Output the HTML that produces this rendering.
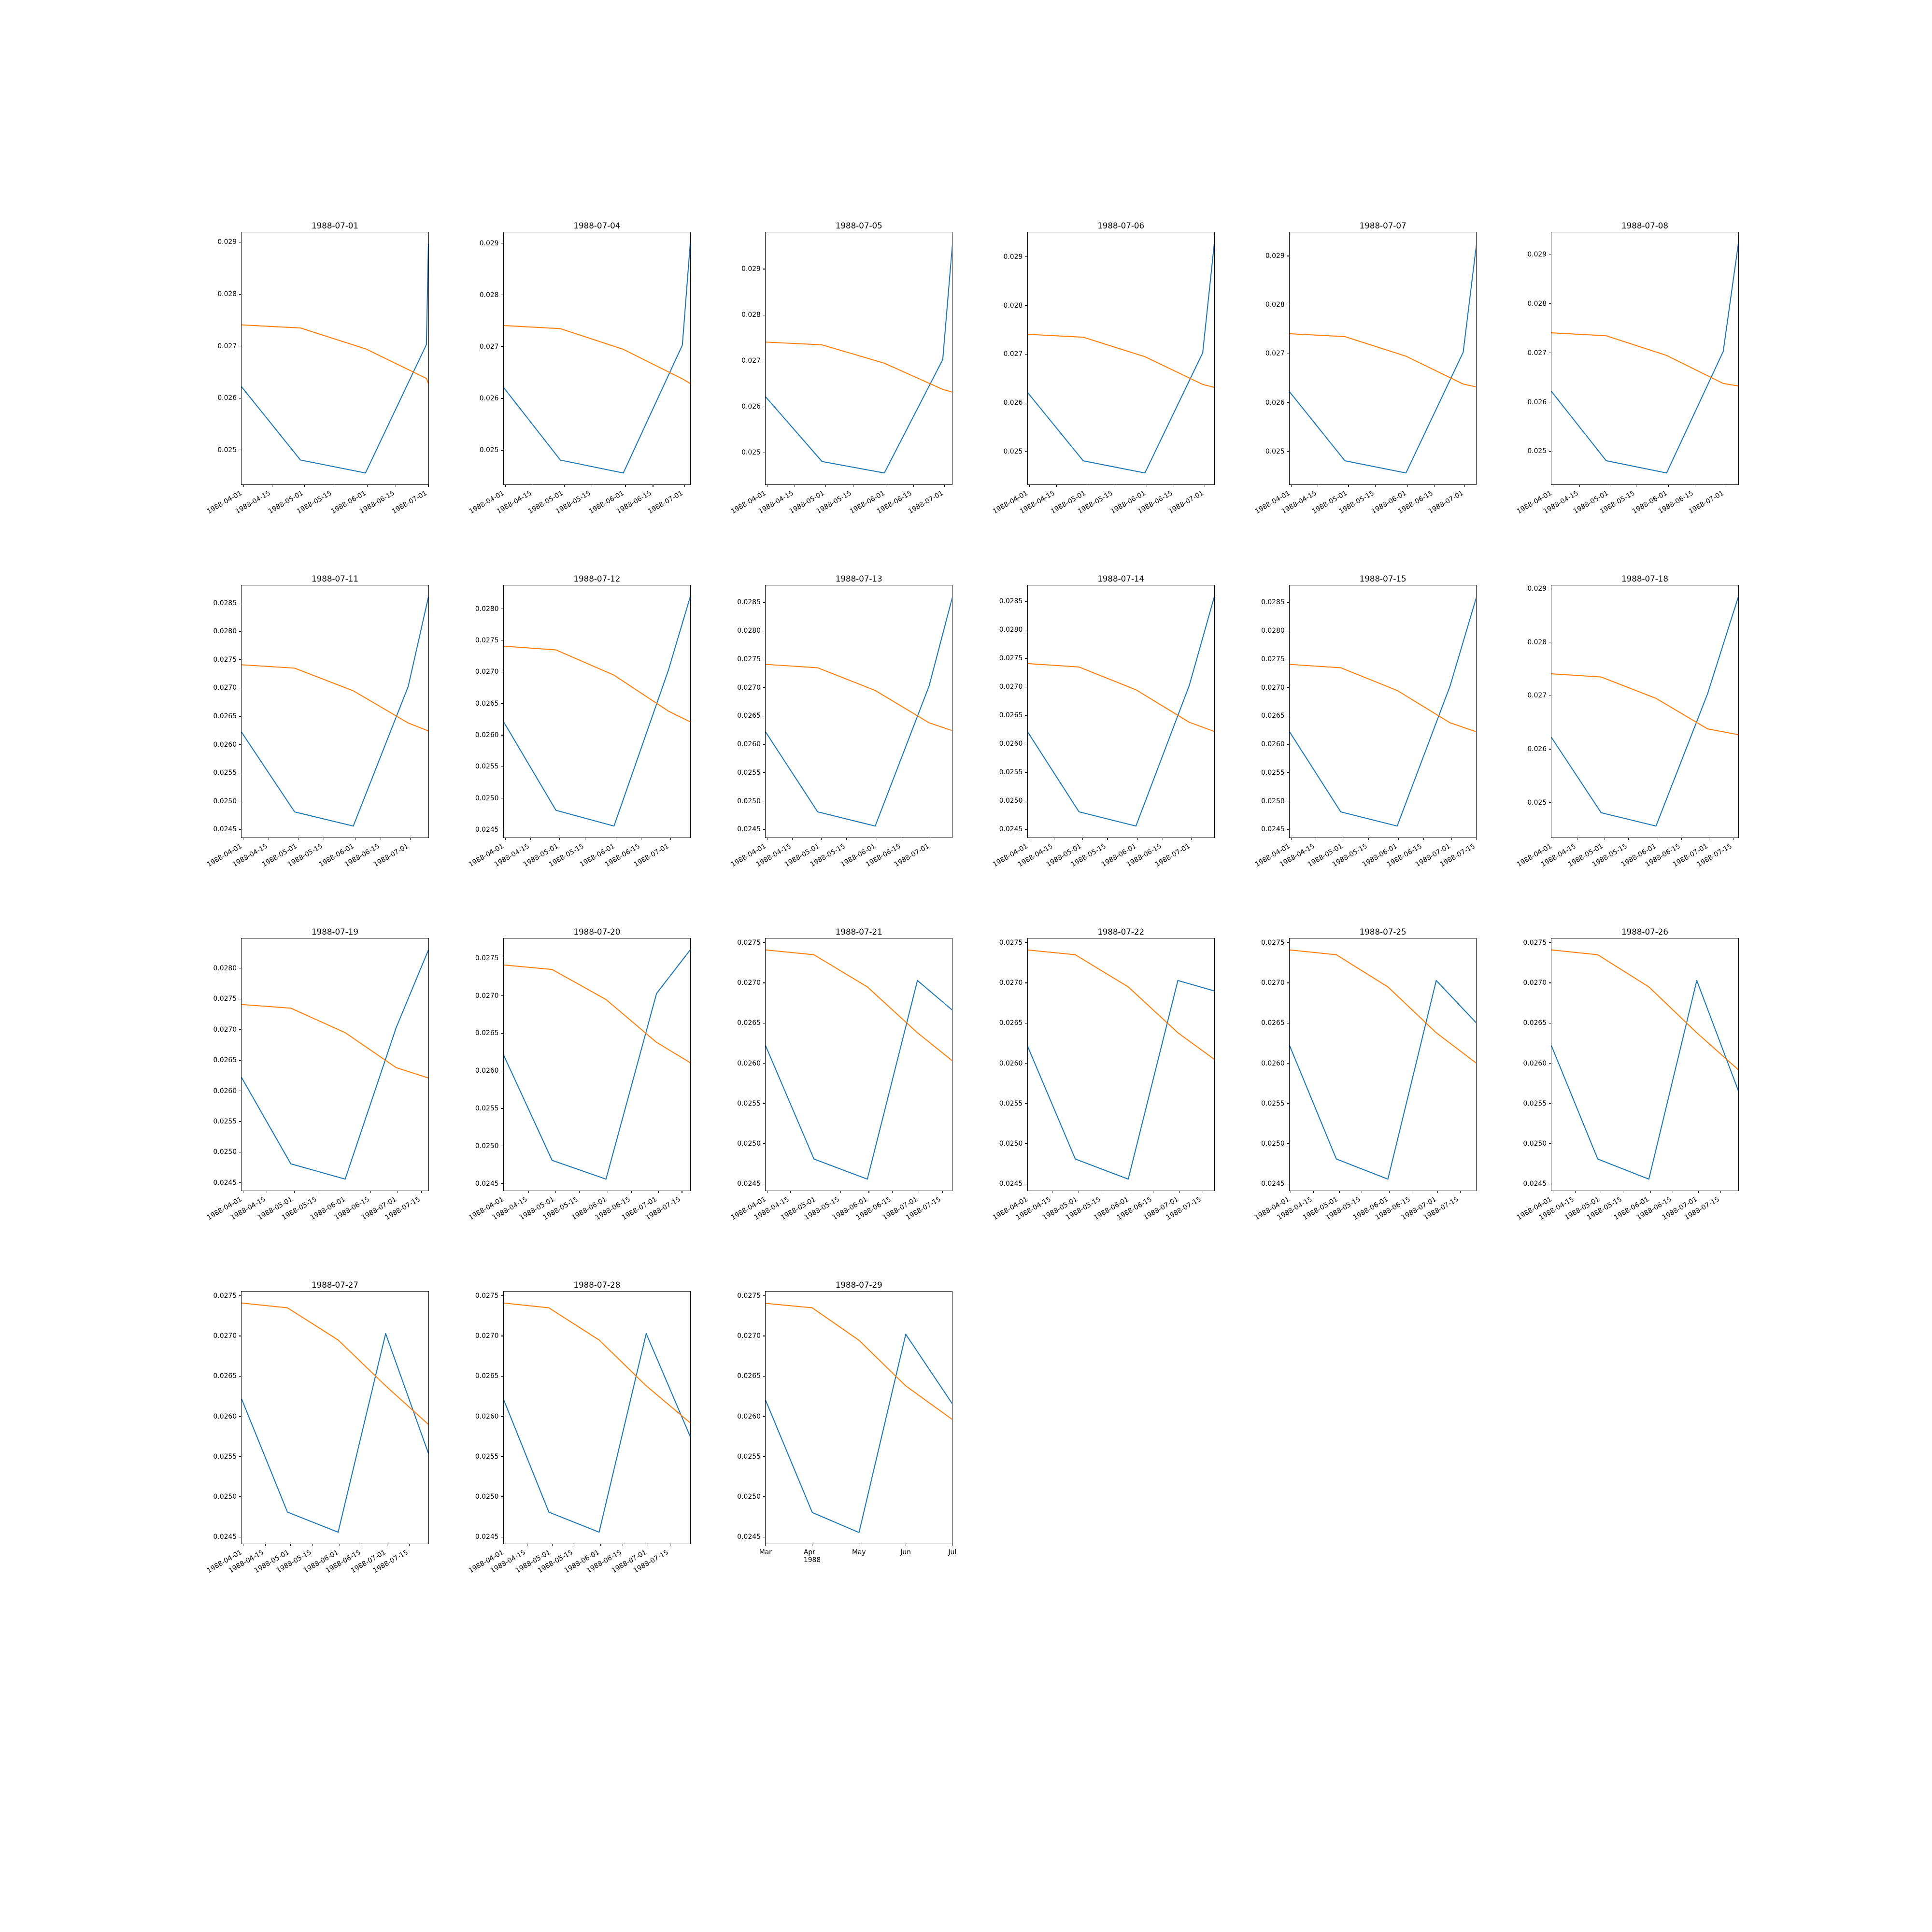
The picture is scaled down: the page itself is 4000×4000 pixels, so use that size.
<!DOCTYPE html>
<html><head><meta charset="utf-8"><style>
html,body{margin:0;padding:0;background:#fff}
body{width:4000px;height:4000px;position:relative;overflow:hidden;font-family:"DejaVu Sans","Liberation Sans",sans-serif;color:#000}
.ax{position:absolute;width:387px;height:522px}
.ax::after{content:"";position:absolute;left:-0.55px;top:-0.55px;right:-0.55px;bottom:-0.55px;border:1.1px solid #000;pointer-events:none}
.ax svg{position:absolute;left:0;top:0;width:387px;height:522px;overflow:hidden}
.ax polyline{fill:none;stroke-width:2.1;vector-effect:non-scaling-stroke;stroke-linejoin:round}
.b{stroke:#1f77b4}.o{stroke:#ff7f0e}
.t{position:absolute;left:0;width:100%;bottom:calc(100% + 4px);text-align:center;font-size:16.7px;line-height:20px;white-space:nowrap}
.yt{position:absolute;left:0;width:0;height:0;top:calc((var(--ymax) - var(--v)) * 522px / var(--H))}
.yt i{position:absolute;left:-5px;top:-0.55px;width:5px;height:1.1px;background:#000}
.yt span{position:absolute;right:9.9px;top:-8px;line-height:16px;font-size:13.9px;white-space:nowrap}
.xt{position:absolute;top:522px;width:0;height:0;left:calc(var(--d) * 387px / var(--xr))}
.xt i{position:absolute;left:-0.55px;top:0;width:1.1px;height:5px;background:#000}
.xt span{position:absolute;right:8px;top:9.8px;line-height:16px;font-size:13.9px;white-space:nowrap;transform-origin:100% 0;transform:rotate(-30deg)}
.xm span{right:auto;left:0;transform:translateX(-50%);transform-origin:50% 0}
.yr{position:absolute;left:0;top:0;font-size:13.9px}
</style></head><body>

<!-- Row 1 -->
<div class="ax" style="left:500px;top:481px;--ymax:291.905;--H:48.51;--xr:92">
<div class="t">1988-07-01</div>
<svg viewBox="0 -291.905 92 48.51" preserveAspectRatio="none"><polyline class="b" points="0,-262.2 29,-248.1 61,-245.6 91,-270.3 92,-289.7"/><polyline class="o" points="0,-274.1 29,-273.5 61,-269.5 91,-263.8 92,-262.8"/></svg>
<div class="yt" style="--v:250"><i></i><span>0.025</span></div><div class="yt" style="--v:260"><i></i><span>0.026</span></div><div class="yt" style="--v:270"><i></i><span>0.027</span></div><div class="yt" style="--v:280"><i></i><span>0.028</span></div><div class="yt" style="--v:290"><i></i><span>0.029</span></div>
<div class="xt" style="--d:1"><i></i><span>1988-04-01</span></div><div class="xt" style="--d:15"><i></i><span>1988-04-15</span></div><div class="xt" style="--d:31"><i></i><span>1988-05-01</span></div><div class="xt" style="--d:45"><i></i><span>1988-05-15</span></div><div class="xt" style="--d:62"><i></i><span>1988-06-01</span></div><div class="xt" style="--d:76"><i></i><span>1988-06-15</span></div><div class="xt" style="--d:92"><i></i><span>1988-07-01</span></div>
</div>

<div class="ax" style="left:1042.4px;top:481px;--ymax:292.115;--H:48.73;--xr:95">
<div class="t">1988-07-04</div>
<svg viewBox="0 -292.115 95 48.73" preserveAspectRatio="none"><polyline class="b" points="0,-262.2 29,-248.1 61,-245.6 91,-270.3 95,-289.9"/><polyline class="o" points="0,-274.1 29,-273.5 61,-269.5 91,-263.8 95,-262.9"/></svg>
<div class="yt" style="--v:250"><i></i><span>0.025</span></div><div class="yt" style="--v:260"><i></i><span>0.026</span></div><div class="yt" style="--v:270"><i></i><span>0.027</span></div><div class="yt" style="--v:280"><i></i><span>0.028</span></div><div class="yt" style="--v:290"><i></i><span>0.029</span></div>
<div class="xt" style="--d:1"><i></i><span>1988-04-01</span></div><div class="xt" style="--d:15"><i></i><span>1988-04-15</span></div><div class="xt" style="--d:31"><i></i><span>1988-05-01</span></div><div class="xt" style="--d:45"><i></i><span>1988-05-15</span></div><div class="xt" style="--d:62"><i></i><span>1988-06-01</span></div><div class="xt" style="--d:76"><i></i><span>1988-06-15</span></div><div class="xt" style="--d:92"><i></i><span>1988-07-01</span></div>
</div>

<div class="ax" style="left:1584.8px;top:481px;--ymax:297.995;--H:54.89;--xr:96">
<div class="t">1988-07-05</div>
<svg viewBox="0 -297.995 96 54.89" preserveAspectRatio="none"><polyline class="b" points="0,-262.2 29,-248.1 61,-245.6 91,-270.3 96,-295.5"/><polyline class="o" points="0,-274.1 29,-273.5 61,-269.5 91,-263.8 96,-263.2"/></svg>
<div class="yt" style="--v:250"><i></i><span>0.025</span></div><div class="yt" style="--v:260"><i></i><span>0.026</span></div><div class="yt" style="--v:270"><i></i><span>0.027</span></div><div class="yt" style="--v:280"><i></i><span>0.028</span></div><div class="yt" style="--v:290"><i></i><span>0.029</span></div>
<div class="xt" style="--d:1"><i></i><span>1988-04-01</span></div><div class="xt" style="--d:15"><i></i><span>1988-04-15</span></div><div class="xt" style="--d:31"><i></i><span>1988-05-01</span></div><div class="xt" style="--d:45"><i></i><span>1988-05-15</span></div><div class="xt" style="--d:62"><i></i><span>1988-06-01</span></div><div class="xt" style="--d:76"><i></i><span>1988-06-15</span></div><div class="xt" style="--d:92"><i></i><span>1988-07-01</span></div>
</div>

<div class="ax" style="left:2127.2px;top:481px;--ymax:295.055;--H:51.81;--xr:97">
<div class="t">1988-07-06</div>
<svg viewBox="0 -295.055 97 51.81" preserveAspectRatio="none"><polyline class="b" points="0,-262.2 29,-248.1 61,-245.6 91,-270.3 97,-292.7"/><polyline class="o" points="0,-274.1 29,-273.5 61,-269.5 91,-263.8 97,-263.2"/></svg>
<div class="yt" style="--v:250"><i></i><span>0.025</span></div><div class="yt" style="--v:260"><i></i><span>0.026</span></div><div class="yt" style="--v:270"><i></i><span>0.027</span></div><div class="yt" style="--v:280"><i></i><span>0.028</span></div><div class="yt" style="--v:290"><i></i><span>0.029</span></div>
<div class="xt" style="--d:1"><i></i><span>1988-04-01</span></div><div class="xt" style="--d:15"><i></i><span>1988-04-15</span></div><div class="xt" style="--d:31"><i></i><span>1988-05-01</span></div><div class="xt" style="--d:45"><i></i><span>1988-05-15</span></div><div class="xt" style="--d:62"><i></i><span>1988-06-01</span></div><div class="xt" style="--d:76"><i></i><span>1988-06-15</span></div><div class="xt" style="--d:92"><i></i><span>1988-07-01</span></div>
</div>

<div class="ax" style="left:2669.6px;top:481px;--ymax:294.845;--H:51.59;--xr:98">
<div class="t">1988-07-07</div>
<svg viewBox="0 -294.845 98 51.59" preserveAspectRatio="none"><polyline class="b" points="0,-262.2 29,-248.1 61,-245.6 91,-270.3 98,-292.5"/><polyline class="o" points="0,-274.1 29,-273.5 61,-269.5 91,-263.8 98,-263.2"/></svg>
<div class="yt" style="--v:250"><i></i><span>0.025</span></div><div class="yt" style="--v:260"><i></i><span>0.026</span></div><div class="yt" style="--v:270"><i></i><span>0.027</span></div><div class="yt" style="--v:280"><i></i><span>0.028</span></div><div class="yt" style="--v:290"><i></i><span>0.029</span></div>
<div class="xt" style="--d:1"><i></i><span>1988-04-01</span></div><div class="xt" style="--d:15"><i></i><span>1988-04-15</span></div><div class="xt" style="--d:31"><i></i><span>1988-05-01</span></div><div class="xt" style="--d:45"><i></i><span>1988-05-15</span></div><div class="xt" style="--d:62"><i></i><span>1988-06-01</span></div><div class="xt" style="--d:76"><i></i><span>1988-06-15</span></div><div class="xt" style="--d:92"><i></i><span>1988-07-01</span></div>
</div>

<div class="ax" style="left:3212px;top:481px;--ymax:294.53;--H:51.26;--xr:99">
<div class="t">1988-07-08</div>
<svg viewBox="0 -294.53 99 51.26" preserveAspectRatio="none"><polyline class="b" points="0,-262.2 29,-248.1 61,-245.6 91,-270.3 99,-292.2"/><polyline class="o" points="0,-274.1 29,-273.5 61,-269.5 91,-263.8 99,-263.3"/></svg>
<div class="yt" style="--v:250"><i></i><span>0.025</span></div><div class="yt" style="--v:260"><i></i><span>0.026</span></div><div class="yt" style="--v:270"><i></i><span>0.027</span></div><div class="yt" style="--v:280"><i></i><span>0.028</span></div><div class="yt" style="--v:290"><i></i><span>0.029</span></div>
<div class="xt" style="--d:1"><i></i><span>1988-04-01</span></div><div class="xt" style="--d:15"><i></i><span>1988-04-15</span></div><div class="xt" style="--d:31"><i></i><span>1988-05-01</span></div><div class="xt" style="--d:45"><i></i><span>1988-05-15</span></div><div class="xt" style="--d:62"><i></i><span>1988-06-01</span></div><div class="xt" style="--d:76"><i></i><span>1988-06-15</span></div><div class="xt" style="--d:92"><i></i><span>1988-07-01</span></div>
</div>

<!-- Row 2 -->
<div class="ax" style="left:500px;top:1212px;--ymax:288.125;--H:44.55;--xr:102">
<div class="t">1988-07-11</div>
<svg viewBox="0 -288.125 102 44.55" preserveAspectRatio="none"><polyline class="b" points="0,-262.2 29,-248.1 61,-245.6 91,-270.3 102,-286.1"/><polyline class="o" points="0,-274.1 29,-273.5 61,-269.5 91,-263.8 102,-262.4"/></svg>
<div class="yt" style="--v:245"><i></i><span>0.0245</span></div><div class="yt" style="--v:250"><i></i><span>0.0250</span></div><div class="yt" style="--v:255"><i></i><span>0.0255</span></div><div class="yt" style="--v:260"><i></i><span>0.0260</span></div><div class="yt" style="--v:265"><i></i><span>0.0265</span></div><div class="yt" style="--v:270"><i></i><span>0.0270</span></div><div class="yt" style="--v:275"><i></i><span>0.0275</span></div><div class="yt" style="--v:280"><i></i><span>0.0280</span></div><div class="yt" style="--v:285"><i></i><span>0.0285</span></div>
<div class="xt" style="--d:1"><i></i><span>1988-04-01</span></div><div class="xt" style="--d:15"><i></i><span>1988-04-15</span></div><div class="xt" style="--d:31"><i></i><span>1988-05-01</span></div><div class="xt" style="--d:45"><i></i><span>1988-05-15</span></div><div class="xt" style="--d:62"><i></i><span>1988-06-01</span></div><div class="xt" style="--d:76"><i></i><span>1988-06-15</span></div><div class="xt" style="--d:92"><i></i><span>1988-07-01</span></div>
</div>

<div class="ax" style="left:1042.4px;top:1212px;--ymax:283.715;--H:39.93;--xr:103">
<div class="t">1988-07-12</div>
<svg viewBox="0 -283.715 103 39.93" preserveAspectRatio="none"><polyline class="b" points="0,-262.2 29,-248.1 61,-245.6 91,-270.3 103,-281.9"/><polyline class="o" points="0,-274.1 29,-273.5 61,-269.5 91,-263.8 103,-262.1"/></svg>
<div class="yt" style="--v:245"><i></i><span>0.0245</span></div><div class="yt" style="--v:250"><i></i><span>0.0250</span></div><div class="yt" style="--v:255"><i></i><span>0.0255</span></div><div class="yt" style="--v:260"><i></i><span>0.0260</span></div><div class="yt" style="--v:265"><i></i><span>0.0265</span></div><div class="yt" style="--v:270"><i></i><span>0.0270</span></div><div class="yt" style="--v:275"><i></i><span>0.0275</span></div><div class="yt" style="--v:280"><i></i><span>0.0280</span></div>
<div class="xt" style="--d:1"><i></i><span>1988-04-01</span></div><div class="xt" style="--d:15"><i></i><span>1988-04-15</span></div><div class="xt" style="--d:31"><i></i><span>1988-05-01</span></div><div class="xt" style="--d:45"><i></i><span>1988-05-15</span></div><div class="xt" style="--d:62"><i></i><span>1988-06-01</span></div><div class="xt" style="--d:76"><i></i><span>1988-06-15</span></div><div class="xt" style="--d:92"><i></i><span>1988-07-01</span></div>
</div>

<div class="ax" style="left:1584.8px;top:1212px;--ymax:288.02;--H:44.44;--xr:104">
<div class="t">1988-07-13</div>
<svg viewBox="0 -288.02 104 44.44" preserveAspectRatio="none"><polyline class="b" points="0,-262.2 29,-248.1 61,-245.6 91,-270.3 104,-286.0"/><polyline class="o" points="0,-274.1 29,-273.5 61,-269.5 91,-263.8 104,-262.4"/></svg>
<div class="yt" style="--v:245"><i></i><span>0.0245</span></div><div class="yt" style="--v:250"><i></i><span>0.0250</span></div><div class="yt" style="--v:255"><i></i><span>0.0255</span></div><div class="yt" style="--v:260"><i></i><span>0.0260</span></div><div class="yt" style="--v:265"><i></i><span>0.0265</span></div><div class="yt" style="--v:270"><i></i><span>0.0270</span></div><div class="yt" style="--v:275"><i></i><span>0.0275</span></div><div class="yt" style="--v:280"><i></i><span>0.0280</span></div><div class="yt" style="--v:285"><i></i><span>0.0285</span></div>
<div class="xt" style="--d:1"><i></i><span>1988-04-01</span></div><div class="xt" style="--d:15"><i></i><span>1988-04-15</span></div><div class="xt" style="--d:31"><i></i><span>1988-05-01</span></div><div class="xt" style="--d:45"><i></i><span>1988-05-15</span></div><div class="xt" style="--d:62"><i></i><span>1988-06-01</span></div><div class="xt" style="--d:76"><i></i><span>1988-06-15</span></div><div class="xt" style="--d:92"><i></i><span>1988-07-01</span></div>
</div>

<div class="ax" style="left:2127.2px;top:1212px;--ymax:287.81;--H:44.22;--xr:105">
<div class="t">1988-07-14</div>
<svg viewBox="0 -287.81 105 44.22" preserveAspectRatio="none"><polyline class="b" points="0,-262.2 29,-248.1 61,-245.6 91,-270.3 105,-285.8"/><polyline class="o" points="0,-274.1 29,-273.5 61,-269.5 91,-263.8 105,-262.2"/></svg>
<div class="yt" style="--v:245"><i></i><span>0.0245</span></div><div class="yt" style="--v:250"><i></i><span>0.0250</span></div><div class="yt" style="--v:255"><i></i><span>0.0255</span></div><div class="yt" style="--v:260"><i></i><span>0.0260</span></div><div class="yt" style="--v:265"><i></i><span>0.0265</span></div><div class="yt" style="--v:270"><i></i><span>0.0270</span></div><div class="yt" style="--v:275"><i></i><span>0.0275</span></div><div class="yt" style="--v:280"><i></i><span>0.0280</span></div><div class="yt" style="--v:285"><i></i><span>0.0285</span></div>
<div class="xt" style="--d:1"><i></i><span>1988-04-01</span></div><div class="xt" style="--d:15"><i></i><span>1988-04-15</span></div><div class="xt" style="--d:31"><i></i><span>1988-05-01</span></div><div class="xt" style="--d:45"><i></i><span>1988-05-15</span></div><div class="xt" style="--d:62"><i></i><span>1988-06-01</span></div><div class="xt" style="--d:76"><i></i><span>1988-06-15</span></div><div class="xt" style="--d:92"><i></i><span>1988-07-01</span></div>
</div>

<div class="ax" style="left:2669.6px;top:1212px;--ymax:288.02;--H:44.44;--xr:106">
<div class="t">1988-07-15</div>
<svg viewBox="0 -288.02 106 44.44" preserveAspectRatio="none"><polyline class="b" points="0,-262.2 29,-248.1 61,-245.6 91,-270.3 106,-286.0"/><polyline class="o" points="0,-274.1 29,-273.5 61,-269.5 91,-263.8 106,-262.2"/></svg>
<div class="yt" style="--v:245"><i></i><span>0.0245</span></div><div class="yt" style="--v:250"><i></i><span>0.0250</span></div><div class="yt" style="--v:255"><i></i><span>0.0255</span></div><div class="yt" style="--v:260"><i></i><span>0.0260</span></div><div class="yt" style="--v:265"><i></i><span>0.0265</span></div><div class="yt" style="--v:270"><i></i><span>0.0270</span></div><div class="yt" style="--v:275"><i></i><span>0.0275</span></div><div class="yt" style="--v:280"><i></i><span>0.0280</span></div><div class="yt" style="--v:285"><i></i><span>0.0285</span></div>
<div class="xt" style="--d:1"><i></i><span>1988-04-01</span></div><div class="xt" style="--d:15"><i></i><span>1988-04-15</span></div><div class="xt" style="--d:31"><i></i><span>1988-05-01</span></div><div class="xt" style="--d:45"><i></i><span>1988-05-15</span></div><div class="xt" style="--d:62"><i></i><span>1988-06-01</span></div><div class="xt" style="--d:76"><i></i><span>1988-06-15</span></div><div class="xt" style="--d:92"><i></i><span>1988-07-01</span></div><div class="xt" style="--d:106"><i></i><span>1988-07-15</span></div>
</div>

<div class="ax" style="left:3212px;top:1212px;--ymax:290.645;--H:47.19;--xr:109">
<div class="t">1988-07-18</div>
<svg viewBox="0 -290.645 109 47.19" preserveAspectRatio="none"><polyline class="b" points="0,-262.2 29,-248.1 61,-245.6 91,-270.3 109,-288.5"/><polyline class="o" points="0,-274.1 29,-273.5 61,-269.5 91,-263.8 109,-262.7"/></svg>
<div class="yt" style="--v:250"><i></i><span>0.025</span></div><div class="yt" style="--v:260"><i></i><span>0.026</span></div><div class="yt" style="--v:270"><i></i><span>0.027</span></div><div class="yt" style="--v:280"><i></i><span>0.028</span></div><div class="yt" style="--v:290"><i></i><span>0.029</span></div>
<div class="xt" style="--d:1"><i></i><span>1988-04-01</span></div><div class="xt" style="--d:15"><i></i><span>1988-04-15</span></div><div class="xt" style="--d:31"><i></i><span>1988-05-01</span></div><div class="xt" style="--d:45"><i></i><span>1988-05-15</span></div><div class="xt" style="--d:62"><i></i><span>1988-06-01</span></div><div class="xt" style="--d:76"><i></i><span>1988-06-15</span></div><div class="xt" style="--d:92"><i></i><span>1988-07-01</span></div><div class="xt" style="--d:106"><i></i><span>1988-07-15</span></div>
</div>

<!-- Row 3 -->
<div class="ax" style="left:500px;top:1943px;--ymax:284.87;--H:41.14;--xr:110">
<div class="t">1988-07-19</div>
<svg viewBox="0 -284.87 110 41.14" preserveAspectRatio="none"><polyline class="b" points="0,-262.2 29,-248.1 61,-245.6 91,-270.3 110,-283.0"/><polyline class="o" points="0,-274.1 29,-273.5 61,-269.5 91,-263.8 110,-262.1"/></svg>
<div class="yt" style="--v:245"><i></i><span>0.0245</span></div><div class="yt" style="--v:250"><i></i><span>0.0250</span></div><div class="yt" style="--v:255"><i></i><span>0.0255</span></div><div class="yt" style="--v:260"><i></i><span>0.0260</span></div><div class="yt" style="--v:265"><i></i><span>0.0265</span></div><div class="yt" style="--v:270"><i></i><span>0.0270</span></div><div class="yt" style="--v:275"><i></i><span>0.0275</span></div><div class="yt" style="--v:280"><i></i><span>0.0280</span></div>
<div class="xt" style="--d:1"><i></i><span>1988-04-01</span></div><div class="xt" style="--d:15"><i></i><span>1988-04-15</span></div><div class="xt" style="--d:31"><i></i><span>1988-05-01</span></div><div class="xt" style="--d:45"><i></i><span>1988-05-15</span></div><div class="xt" style="--d:62"><i></i><span>1988-06-01</span></div><div class="xt" style="--d:76"><i></i><span>1988-06-15</span></div><div class="xt" style="--d:92"><i></i><span>1988-07-01</span></div><div class="xt" style="--d:106"><i></i><span>1988-07-15</span></div>
</div>

<div class="ax" style="left:1042.4px;top:1943px;--ymax:277.625;--H:33.55;--xr:111">
<div class="t">1988-07-20</div>
<svg viewBox="0 -277.625 111 33.55" preserveAspectRatio="none"><polyline class="b" points="0,-262.2 29,-248.1 61,-245.6 91,-270.3 111,-276.1"/><polyline class="o" points="0,-274.1 29,-273.5 61,-269.5 91,-263.8 111,-261.1"/></svg>
<div class="yt" style="--v:245"><i></i><span>0.0245</span></div><div class="yt" style="--v:250"><i></i><span>0.0250</span></div><div class="yt" style="--v:255"><i></i><span>0.0255</span></div><div class="yt" style="--v:260"><i></i><span>0.0260</span></div><div class="yt" style="--v:265"><i></i><span>0.0265</span></div><div class="yt" style="--v:270"><i></i><span>0.0270</span></div><div class="yt" style="--v:275"><i></i><span>0.0275</span></div>
<div class="xt" style="--d:1"><i></i><span>1988-04-01</span></div><div class="xt" style="--d:15"><i></i><span>1988-04-15</span></div><div class="xt" style="--d:31"><i></i><span>1988-05-01</span></div><div class="xt" style="--d:45"><i></i><span>1988-05-15</span></div><div class="xt" style="--d:62"><i></i><span>1988-06-01</span></div><div class="xt" style="--d:76"><i></i><span>1988-06-15</span></div><div class="xt" style="--d:92"><i></i><span>1988-07-01</span></div><div class="xt" style="--d:106"><i></i><span>1988-07-15</span></div>
</div>

<div class="ax" style="left:1584.8px;top:1943px;--ymax:275.525;--H:31.35;--xr:112">
<div class="t">1988-07-21</div>
<svg viewBox="0 -275.525 112 31.35" preserveAspectRatio="none"><polyline class="b" points="0,-262.2 29,-248.1 61,-245.6 91,-270.3 112,-266.6"/><polyline class="o" points="0,-274.1 29,-273.5 61,-269.5 91,-263.8 112,-260.3"/></svg>
<div class="yt" style="--v:245"><i></i><span>0.0245</span></div><div class="yt" style="--v:250"><i></i><span>0.0250</span></div><div class="yt" style="--v:255"><i></i><span>0.0255</span></div><div class="yt" style="--v:260"><i></i><span>0.0260</span></div><div class="yt" style="--v:265"><i></i><span>0.0265</span></div><div class="yt" style="--v:270"><i></i><span>0.0270</span></div><div class="yt" style="--v:275"><i></i><span>0.0275</span></div>
<div class="xt" style="--d:1"><i></i><span>1988-04-01</span></div><div class="xt" style="--d:15"><i></i><span>1988-04-15</span></div><div class="xt" style="--d:31"><i></i><span>1988-05-01</span></div><div class="xt" style="--d:45"><i></i><span>1988-05-15</span></div><div class="xt" style="--d:62"><i></i><span>1988-06-01</span></div><div class="xt" style="--d:76"><i></i><span>1988-06-15</span></div><div class="xt" style="--d:92"><i></i><span>1988-07-01</span></div><div class="xt" style="--d:106"><i></i><span>1988-07-15</span></div>
</div>

<div class="ax" style="left:2127.2px;top:1943px;--ymax:275.525;--H:31.35;--xr:113">
<div class="t">1988-07-22</div>
<svg viewBox="0 -275.525 113 31.35" preserveAspectRatio="none"><polyline class="b" points="0,-262.2 29,-248.1 61,-245.6 91,-270.3 113,-269.0"/><polyline class="o" points="0,-274.1 29,-273.5 61,-269.5 91,-263.8 113,-260.5"/></svg>
<div class="yt" style="--v:245"><i></i><span>0.0245</span></div><div class="yt" style="--v:250"><i></i><span>0.0250</span></div><div class="yt" style="--v:255"><i></i><span>0.0255</span></div><div class="yt" style="--v:260"><i></i><span>0.0260</span></div><div class="yt" style="--v:265"><i></i><span>0.0265</span></div><div class="yt" style="--v:270"><i></i><span>0.0270</span></div><div class="yt" style="--v:275"><i></i><span>0.0275</span></div>
<div class="xt" style="--d:1"><i></i><span>1988-04-01</span></div><div class="xt" style="--d:15"><i></i><span>1988-04-15</span></div><div class="xt" style="--d:31"><i></i><span>1988-05-01</span></div><div class="xt" style="--d:45"><i></i><span>1988-05-15</span></div><div class="xt" style="--d:62"><i></i><span>1988-06-01</span></div><div class="xt" style="--d:76"><i></i><span>1988-06-15</span></div><div class="xt" style="--d:92"><i></i><span>1988-07-01</span></div><div class="xt" style="--d:106"><i></i><span>1988-07-15</span></div>
</div>

<div class="ax" style="left:2669.6px;top:1943px;--ymax:275.525;--H:31.35;--xr:116">
<div class="t">1988-07-25</div>
<svg viewBox="0 -275.525 116 31.35" preserveAspectRatio="none"><polyline class="b" points="0,-262.2 29,-248.1 61,-245.6 91,-270.3 116,-265.0"/><polyline class="o" points="0,-274.1 29,-273.5 61,-269.5 91,-263.8 116,-260.0"/></svg>
<div class="yt" style="--v:245"><i></i><span>0.0245</span></div><div class="yt" style="--v:250"><i></i><span>0.0250</span></div><div class="yt" style="--v:255"><i></i><span>0.0255</span></div><div class="yt" style="--v:260"><i></i><span>0.0260</span></div><div class="yt" style="--v:265"><i></i><span>0.0265</span></div><div class="yt" style="--v:270"><i></i><span>0.0270</span></div><div class="yt" style="--v:275"><i></i><span>0.0275</span></div>
<div class="xt" style="--d:1"><i></i><span>1988-04-01</span></div><div class="xt" style="--d:15"><i></i><span>1988-04-15</span></div><div class="xt" style="--d:31"><i></i><span>1988-05-01</span></div><div class="xt" style="--d:45"><i></i><span>1988-05-15</span></div><div class="xt" style="--d:62"><i></i><span>1988-06-01</span></div><div class="xt" style="--d:76"><i></i><span>1988-06-15</span></div><div class="xt" style="--d:92"><i></i><span>1988-07-01</span></div><div class="xt" style="--d:106"><i></i><span>1988-07-15</span></div>
</div>

<div class="ax" style="left:3212px;top:1943px;--ymax:275.525;--H:31.35;--xr:117">
<div class="t">1988-07-26</div>
<svg viewBox="0 -275.525 117 31.35" preserveAspectRatio="none"><polyline class="b" points="0,-262.2 29,-248.1 61,-245.6 91,-270.3 117,-256.6"/><polyline class="o" points="0,-274.1 29,-273.5 61,-269.5 91,-263.8 117,-259.2"/></svg>
<div class="yt" style="--v:245"><i></i><span>0.0245</span></div><div class="yt" style="--v:250"><i></i><span>0.0250</span></div><div class="yt" style="--v:255"><i></i><span>0.0255</span></div><div class="yt" style="--v:260"><i></i><span>0.0260</span></div><div class="yt" style="--v:265"><i></i><span>0.0265</span></div><div class="yt" style="--v:270"><i></i><span>0.0270</span></div><div class="yt" style="--v:275"><i></i><span>0.0275</span></div>
<div class="xt" style="--d:1"><i></i><span>1988-04-01</span></div><div class="xt" style="--d:15"><i></i><span>1988-04-15</span></div><div class="xt" style="--d:31"><i></i><span>1988-05-01</span></div><div class="xt" style="--d:45"><i></i><span>1988-05-15</span></div><div class="xt" style="--d:62"><i></i><span>1988-06-01</span></div><div class="xt" style="--d:76"><i></i><span>1988-06-15</span></div><div class="xt" style="--d:92"><i></i><span>1988-07-01</span></div><div class="xt" style="--d:106"><i></i><span>1988-07-15</span></div>
</div>

<!-- Row 4 -->
<div class="ax" style="left:500px;top:2674px;--ymax:275.525;--H:31.35;--xr:118">
<div class="t">1988-07-27</div>
<svg viewBox="0 -275.525 118 31.35" preserveAspectRatio="none"><polyline class="b" points="0,-262.2 29,-248.1 61,-245.6 91,-270.3 118,-255.4"/><polyline class="o" points="0,-274.1 29,-273.5 61,-269.5 91,-263.8 118,-259.0"/></svg>
<div class="yt" style="--v:245"><i></i><span>0.0245</span></div><div class="yt" style="--v:250"><i></i><span>0.0250</span></div><div class="yt" style="--v:255"><i></i><span>0.0255</span></div><div class="yt" style="--v:260"><i></i><span>0.0260</span></div><div class="yt" style="--v:265"><i></i><span>0.0265</span></div><div class="yt" style="--v:270"><i></i><span>0.0270</span></div><div class="yt" style="--v:275"><i></i><span>0.0275</span></div>
<div class="xt" style="--d:1"><i></i><span>1988-04-01</span></div><div class="xt" style="--d:15"><i></i><span>1988-04-15</span></div><div class="xt" style="--d:31"><i></i><span>1988-05-01</span></div><div class="xt" style="--d:45"><i></i><span>1988-05-15</span></div><div class="xt" style="--d:62"><i></i><span>1988-06-01</span></div><div class="xt" style="--d:76"><i></i><span>1988-06-15</span></div><div class="xt" style="--d:92"><i></i><span>1988-07-01</span></div><div class="xt" style="--d:106"><i></i><span>1988-07-15</span></div>
</div>

<div class="ax" style="left:1042.4px;top:2674px;--ymax:275.525;--H:31.35;--xr:119">
<div class="t">1988-07-28</div>
<svg viewBox="0 -275.525 119 31.35" preserveAspectRatio="none"><polyline class="b" points="0,-262.2 29,-248.1 61,-245.6 91,-270.3 119,-257.5"/><polyline class="o" points="0,-274.1 29,-273.5 61,-269.5 91,-263.8 119,-259.2"/></svg>
<div class="yt" style="--v:245"><i></i><span>0.0245</span></div><div class="yt" style="--v:250"><i></i><span>0.0250</span></div><div class="yt" style="--v:255"><i></i><span>0.0255</span></div><div class="yt" style="--v:260"><i></i><span>0.0260</span></div><div class="yt" style="--v:265"><i></i><span>0.0265</span></div><div class="yt" style="--v:270"><i></i><span>0.0270</span></div><div class="yt" style="--v:275"><i></i><span>0.0275</span></div>
<div class="xt" style="--d:1"><i></i><span>1988-04-01</span></div><div class="xt" style="--d:15"><i></i><span>1988-04-15</span></div><div class="xt" style="--d:31"><i></i><span>1988-05-01</span></div><div class="xt" style="--d:45"><i></i><span>1988-05-15</span></div><div class="xt" style="--d:62"><i></i><span>1988-06-01</span></div><div class="xt" style="--d:76"><i></i><span>1988-06-15</span></div><div class="xt" style="--d:92"><i></i><span>1988-07-01</span></div><div class="xt" style="--d:106"><i></i><span>1988-07-15</span></div>
</div>

<div class="ax" style="left:1584.8px;top:2674px;--ymax:275.525;--H:31.35;--xr:4">
<div class="t">1988-07-29</div>
<svg viewBox="0 -275.525 4 31.35" preserveAspectRatio="none"><polyline class="b" points="0,-262.02 1,-248.05 2,-245.56 3,-270.21 4,-261.54"/><polyline class="o" points="0,-274.06 1,-273.5 2,-269.46 3,-263.79 4,-259.6"/></svg>
<div class="yt" style="--v:245"><i></i><span>0.0245</span></div><div class="yt" style="--v:250"><i></i><span>0.0250</span></div><div class="yt" style="--v:255"><i></i><span>0.0255</span></div><div class="yt" style="--v:260"><i></i><span>0.0260</span></div><div class="yt" style="--v:265"><i></i><span>0.0265</span></div><div class="yt" style="--v:270"><i></i><span>0.0270</span></div><div class="yt" style="--v:275"><i></i><span>0.0275</span></div>
<div class="xt xm" style="--d:0"><i></i><span>Mar</span></div><div class="xt xm" style="--d:1"><i></i><span>Apr<br>1988</span></div><div class="xt xm" style="--d:2"><i></i><span>May</span></div><div class="xt xm" style="--d:3"><i></i><span>Jun</span></div><div class="xt xm" style="--d:4"><i></i><span>Jul</span></div>
</div>

</body></html>
